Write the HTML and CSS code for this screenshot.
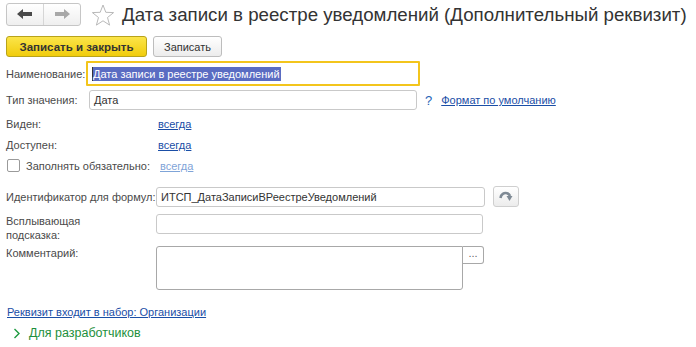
FILE: index.html
```html
<!DOCTYPE html>
<html lang="ru">
<head>
    <meta charset="UTF-8">
    <title>Дата записи в реестре уведомлений (Дополнительный реквизит)</title>
    <link rel="stylesheet" href="styles.css">
</head>
<body>

<div class="header">
    <div class="nav">
        <span class="nav-btn">
            <svg width="16" height="10" viewBox="0 0 16 10"><path d="M0 5 L6 0 L6 3 L15 3 L15 7 L6 7 L6 10 Z" fill="#4a4a4a"/></svg>
        </span>
        <span class="nav-btn">
            <svg width="16" height="10" viewBox="0 0 16 10"><path d="M16 5 L10 0 L10 3 L1 3 L1 7 L10 7 L10 10 Z" fill="#a8a8a8"/></svg>
        </span>
    </div>
    <svg class="star" width="24" height="23" viewBox="0 0 24 23"><path d="M12 1 L14.8 8.3 L22.6 8.6 L16.5 13.5 L18.6 21.1 L12 16.8 L5.4 21.1 L7.5 13.5 L1.4 8.6 L9.2 8.3 Z" fill="none" stroke="#b9b9b9" stroke-width="1"/></svg>
    <h1>Дата записи в реестре уведомлений (Дополнительный реквизит)</h1>
</div>

<div class="toolbar">
    <button class="btn btn-main">Записать и закрыть</button>
    <button class="btn">Записать</button>
</div>

<div class="row row-name">
    <span class="label label-top">Наименование:</span>
    <div class="field field-focus"><span class="caret"></span><span class="selected">Дата записи в реестре уведомлений</span></div>
</div>

<div class="row row-type">
    <span class="label label-top">Тип значения:</span>
    <div class="field field-type">Дата</div>
    <span class="help">?</span>
    <a class="link" href="#">Формат по умолчанию</a>
</div>

<div class="row row-plain">
    <span class="label label-wide">Виден:</span>
    <a class="link" href="#">всегда</a>
</div>

<div class="row row-plain">
    <span class="label label-wide">Доступен:</span>
    <a class="link" href="#">всегда</a>
</div>

<div class="row row-plain">
    <span class="check"></span>
    <span class="label label-check">Заполнять обязательно:</span>
    <a class="link link-light" href="#">всегда</a>
</div>

<div class="row row-id">
    <span class="label label-form">Идентификатор для формул:</span>
    <div class="field field-id">ИТСП_ДатаЗаписиВРеестреУведомлений</div>
    <span class="icon-btn">
        <svg width="14" height="12" viewBox="0 0 14 12"><path d="M1.5 7 C2 3 5 1.5 8 2.2 C9.5 2.6 10.5 3.5 11 5" fill="none" stroke="#7f8a95" stroke-width="2.6"/><path d="M7.5 5 L13.5 5 L10.5 10 Z" fill="#7f8a95"/></svg>
    </span>
</div>

<div class="row row-tip">
    <span class="label label-form">Всплывающая<br>подсказка:</span>
    <div class="field field-tip"></div>
</div>

<div class="row row-comment">
    <span class="label label-form">Комментарий:</span>
    <div class="field field-comment"></div>
    <span class="dots-btn">...</span>
</div>

<a class="link link-set" href="#">Реквизит входит в набор: Организации</a>

<div class="dev">
    <svg width="8" height="11" viewBox="0 0 8 11"><path d="M1.5 1 L6 5.5 L1.5 10" fill="none" stroke="#1d9a3f" stroke-width="1.4"/></svg>
    <span>Для разработчиков</span>
</div>

</body>
</html>
```

FILE: styles.css
```css
/* Общие стили */
body {
    margin: 0;
    padding: 0 6px;
    font-family: 'Liberation Sans', Arial, sans-serif;
    font-size: 11px;
    color: #4a4a4a;
    background: #fff;
}

/* Заголовок */
.header {
    display: flex;
    align-items: center;
    height: 30px;
}
.nav {
    display: flex;
    flex-shrink: 0;
    height: 21px;
    margin-top: -2px;
    border: 1px solid #c6c6c6;
    border-radius: 3px;
    background: linear-gradient(#ffffff, #efefef);
}
.nav-btn {
    display: flex;
    align-items: center;
    justify-content: center;
    width: 36px;
}
.nav-btn + .nav-btn {
    border-left: 1px solid #d6d6d6;
}
.star {
    flex-shrink: 0;
    margin-left: 10px;
}
h1 {
    margin: 0 0 0 7px;
    font-size: 18.7px;
    font-weight: normal;
    color: #333;
    white-space: nowrap;
}

/* Панель кнопок */
.toolbar {
    display: flex;
    gap: 6px;
    margin-top: 6px;
}
.btn {
    height: 21px;
    padding: 0 10px;
    font-family: inherit;
    font-size: 11px;
    color: #333;
    border: 1px solid #bdbdbd;
    border-radius: 3px;
    background: linear-gradient(#ffffff, #ececec);
}
.btn-main {
    width: 141px;
    font-weight: bold;
    font-size: 11.5px;
    color: #333;
    border-color: #b8a31a;
    background: linear-gradient(#fbe54a, #f1cc0c);
}

/* Строки формы */
.row {
    display: flex;
    align-items: center;
}
.label {
    flex-shrink: 0;
}
.label-top {
    width: 80px;
}
.label-wide {
    width: 152px;
}
.label-check {
    width: 134px;
}
.label-form {
    width: 150px;
}
.field {
    box-sizing: border-box;
    border: 1px solid #c9c9c9;
    border-radius: 3px;
    color: #333;
    padding: 0 4px;
    display: flex;
    align-items: center;
}
.row-name {
    margin-top: 4px;
}
.field-focus {
    width: 334px;
    height: 25px;
    border: 2px solid #f3c51c;
    border-radius: 1px;
    padding-left: 4px;
}
.caret {
    width: 1px;
    height: 14px;
    background: #333;
}
.selected {
    background: #5a6cc2;
    color: #fff;
    line-height: 14px;
    padding-right: 1px;
}
.row-type {
    margin-top: 4px;
}
.field-type {
    width: 328px;
    height: 20px;
    margin-left: 3px;
}
.help {
    margin-left: 8px;
    color: #1f64b6;
    font-size: 13px;
}
.row-type .link {
    margin-left: 9px;
}
.link {
    color: #1a4ea6;
    text-decoration: underline;
}
.link-light {
    color: #7fa4d8;
}
.row-plain {
    height: 21px;
}
.row-type + .row-plain {
    margin-top: 3px;
}
.check {
    box-sizing: border-box;
    width: 13px;
    height: 13px;
    margin: 0 6px 0 1px;
    border: 1px solid #9a9a9a;
    border-radius: 2px;
}
.row-id {
    margin-top: 10px;
}
.field-id {
    width: 329px;
    height: 20px;
}
.icon-btn {
    box-sizing: border-box;
    display: flex;
    align-items: center;
    justify-content: center;
    width: 26px;
    height: 21px;
    margin-left: 8px;
    border: 1px solid #cfcfcf;
    border-radius: 3px;
    background: linear-gradient(#ffffff, #ececec);
}
.row-tip {
    margin-top: 7px;
    align-items: flex-start;
    height: 32px;
}
.row-tip .label {
    line-height: 14px;
}
.field-tip {
    width: 327px;
    height: 20px;
}
.row-comment {
    align-items: flex-start;
}
.row-comment .label {
    line-height: 14px;
}
.field-comment {
    width: 307px;
    height: 44px;
    border-color: #a8a8a8;
    border-radius: 3px 0 3px 3px;
}
.dots-btn {
    box-sizing: border-box;
    width: 21px;
    height: 18px;
    border: 1px solid #a8a8a8;
    border-left: none;
    border-radius: 0 3px 3px 0;
    text-align: center;
    line-height: 12px;
    font-size: 11px;
    color: #666;
}
.link-set {
    display: block;
    margin-top: 16px;
    margin-left: 1px;
}
.dev {
    display: flex;
    align-items: center;
    gap: 8px;
    margin-top: 8px;
    margin-left: 7px;
    color: #1d8f3c;
    font-size: 12.5px;
}
```
